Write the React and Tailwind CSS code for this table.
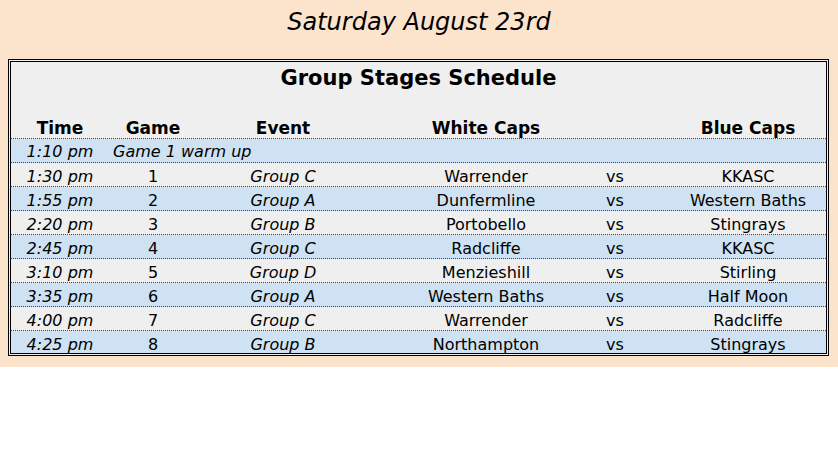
import React from "react";

const rows = [
  ["1:30 pm", "1", "Group C", "Warrender", "KKASC"],
  ["1:55 pm", "2", "Group A", "Dunfermline", "Western Baths"],
  ["2:20 pm", "3", "Group B", "Portobello", "Stingrays"],
  ["2:45 pm", "4", "Group C", "Radcliffe", "KKASC"],
  ["3:10 pm", "5", "Group D", "Menzieshill", "Stirling"],
  ["3:35 pm", "6", "Group A", "Western Baths", "Half Moon"],
  ["4:00 pm", "7", "Group C", "Warrender", "Radcliffe"],
  ["4:25 pm", "8", "Group B", "Northampton", "Stingrays"],
];

const grid = "grid grid-cols-[98px_88px_172px_234px_24px_43px_156px] items-center";

export default function App() {
  return (
    <div className="w-full bg-[#fce4cc] pb-[11px] text-black" style={{ fontFamily: '"DejaVu Sans", Verdana, sans-serif' }}>
      <div className="h-[59px] pt-[7px] text-center text-[24px] italic leading-[30px]">
        Saturday August 23rd
      </div>
      <div className="ml-2 w-[821px] border-[3px] border-double border-black bg-[#efefef]">
        <div className="h-[53px] pt-[1px] text-center text-[21px] font-bold leading-[30px]">
          Group Stages Schedule
        </div>
        <div className={`${grid} h-[24px] pt-[1px] border-b border-dotted border-[#444] text-[17px] font-bold`}>
          <div className="text-center">Time</div>
          <div className="text-center">Game</div>
          <div className="text-center">Event</div>
          <div className="text-center">White Caps</div>
          <div></div>
          <div></div>
          <div className="text-center">Blue Caps</div>
        </div>
        <div className="flex h-[24px] items-center pt-[2px] border-b border-dotted border-[#444] bg-[#cfe2f3] text-[16px] italic">
          <div className="w-[98px] text-center">1:10 pm</div>
          <div className="pl-1">Game 1 warm up</div>
        </div>
        {rows.map((r, i) => (
          <div
            key={i}
            className={`${grid} pt-[2px] text-[16px] ${i % 2 === 0 ? "bg-[#efefef]" : "bg-[#cfe2f3]"} ${
              i === rows.length - 1 ? "h-[22px]" : "h-[24px] border-b border-dotted border-[#444]"
            }`}
          >
            <div className="text-center italic">{r[0]}</div>
            <div className="text-center">{r[1]}</div>
            <div className="text-center italic">{r[2]}</div>
            <div className="text-center">{r[3]}</div>
            <div className="text-center">vs</div>
            <div></div>
            <div className="text-center">{r[4]}</div>
          </div>
        ))}
      </div>
    </div>
  );
}
